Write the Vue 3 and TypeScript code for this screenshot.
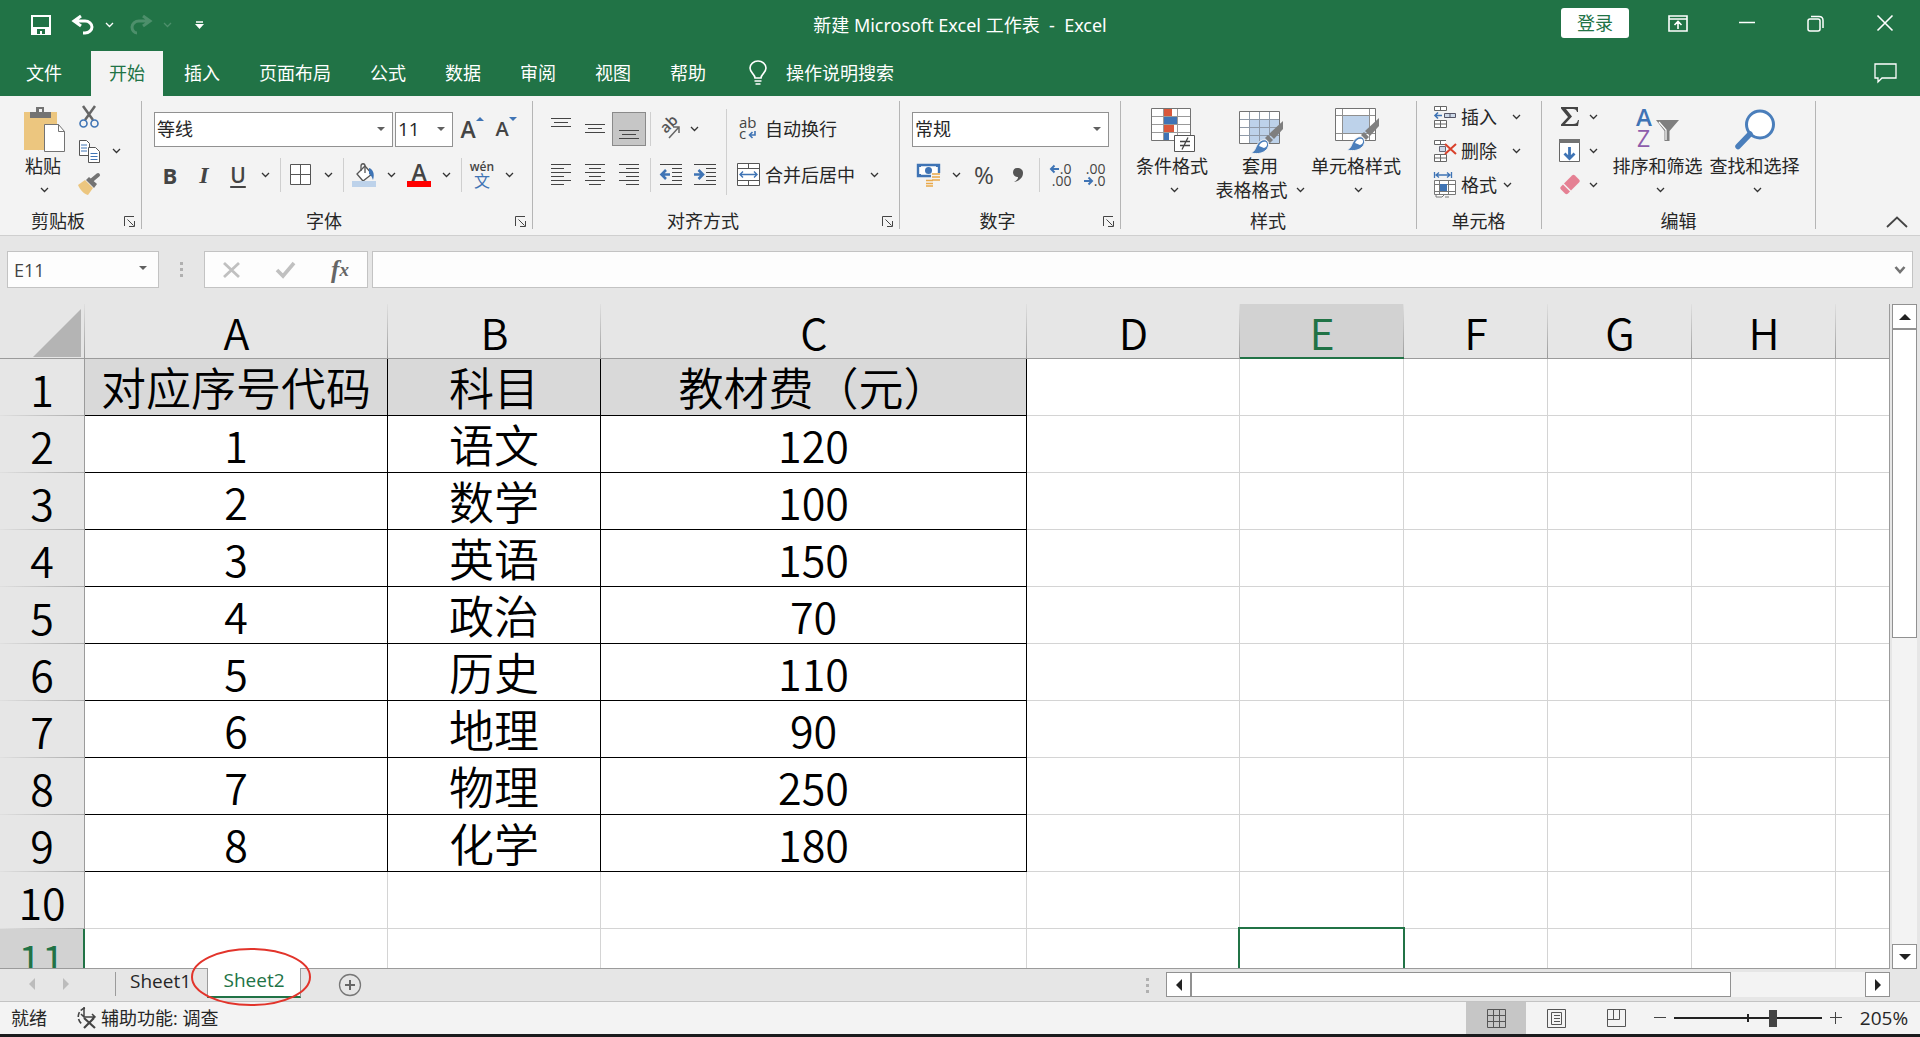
<script setup lang="ts">
import { h, ref } from 'vue'

type Glyph = [number, number, string]

const brush =
  '<path d="M43 12v8L34 30l-5-5z" fill="#7f7f7f"/><path d="M33 31l-3 3-5-5 3-3z" fill="#7f7f7f"/><path d="M26 31c4 3 3 8-1 11-4 3-9 3-14 2 4-2 4-4 6-8 2-4 6-6 9-5z" fill="#4a7ebb" stroke="#f3f3f3"/><path d="M26 33c2 2 1 5-2 6l-5-2c1-3 4-5 7-4z" fill="#fff"/>'
const miniLines = (rows: [number, number, number][]) =>
  rows.map(([y, a, b]) => `<path d="M${a} ${y}.5H${b}" stroke="#444"/>`).join('')

const glyphs: Record<string, Glyph> = {
  save: [20, 20, '<path d="M1 1h18v18H1z" fill="none" stroke="#fff" stroke-width="2"/><path d="M1 12h18v7H1z" fill="#fff"/><path d="M6 14h8v5h-3v-3H9v3H6z" fill="#217346"/>'],
  undo: [22, 20, '<path d="M9 1L2 6l7 5M2 6h11c4 0 7 3 7 6s-3 6-7 6h-2" fill="none" stroke="#fff" stroke-width="3"/>'],
  redo: [22, 20, '<path d="M13 1l7 5-7 5M20 6H9c-4 0-7 3-7 6s2 6 5 6" fill="none" stroke="#4d8f6b" stroke-width="3"/>'],
  custom: [9, 8, '<path d="M1 1h7" stroke="#fff" stroke-width="1.5"/><path d="M0 3h9L4.500 8z" fill="#fff"/>'],
  ribbonMode: [20, 17, '<path d="M1 1h18v15H1zM1 4h18M10 14V7M6.500 10L10 6.500l3.500 3.500" fill="none" stroke="#fff" stroke-width="1.600"/>'],
  minimise: [16, 16, '<path d="M0 7.500h16" stroke="#fff" stroke-width="1.500"/>'],
  restore: [17, 17, '<rect x="1" y="4" width="12" height="12" rx="2" fill="none" stroke="#fff" stroke-width="1.500"/><path d="M4 1.500h8c2.500 0 4 1.500 4 4V13" fill="none" stroke="#fff" stroke-width="1.500"/>'],
  close: [16, 16, '<path d="M.5.5l15 15M15.500.5l-15 15" stroke="#fff" stroke-width="1.600"/>'],
  comment: [23, 20, '<path d="M1 1h21v14H8l-4 4v-4H1z" fill="none" stroke="#fff" stroke-width="1.300"/>'],
  bulb: [18, 24, '<path d="M6 17c0-4-5-5-5-10a8 7 0 0 1 16 0c0 5-5 6-5 10z" fill="none" stroke="#fff" stroke-width="1.600"/><path d="M5.500 20h7M6.500 23h5" stroke="#fff" stroke-width="1.500"/>'],
  chev: [9, 6, '<path d="M1 1l3.500 3.500L8 1" fill="none" stroke="#333" stroke-width="1.300"/>'],
  chevWhite: [9, 6, '<path d="M1 1l3.500 3.500L8 1" fill="none" stroke="#fff" stroke-width="1.300"/>'],
  chevDim: [9, 6, '<path d="M1 1l3.500 3.500L8 1" fill="none" stroke="#4d8f6b" stroke-width="1.300"/>'],
  launcher: [11, 11, '<path d="M.5 10V.5H10M3.500 3.500l6 6M10.500 5v5.500H5" fill="none" stroke="#444"/>'],
  paste: [46, 46, '<g transform="translate(4 0)"><path d="M0 5h33v38H0z" fill="#ecc67f"/><path d="M6 5h6V0h8v5h7v6H6z" fill="#737373"/><path d="M15 2h3v3h-3z" fill="#f3f3f3"/><path d="M20.500 17.500h14l6 7v20h-20z" fill="#fff" stroke="#737373"/><path d="M34.500 17.500v7h6" fill="none" stroke="#737373"/></g>'],
  cut: [20, 22, '<path d="M4 0l10 14M16 0L6 14" stroke="#666" stroke-width="2.500"/><circle cx="4.500" cy="17.500" r="3.500" fill="none" stroke="#3f74b5" stroke-width="1.600"/><circle cx="15.500" cy="17.500" r="3.500" fill="none" stroke="#3f74b5" stroke-width="1.600"/>'],
  copy: [21, 23, '<path d="M.5.500h7l3 3v12H.500z" fill="#fff" stroke="#555"/><path d="M2 5h6M2 8h6M2 11h6" stroke="#3f74b5"/><path d="M9.500 7.500h7l4 4v11h-11z" fill="#fff" stroke="#555"/><path d="M11.500 13.500h7M11.500 16.500h7M11.500 19.500h7" stroke="#3f74b5"/>'],
  painter: [22, 22, '<path d="M0 11l7-5 8 8-5 7c-4-1-8-5-10-10z" fill="#ecc67f"/><path d="M8 6l3-3 8 7-3 4z" fill="#737373"/><path d="M14 6l6-5" stroke="#737373" stroke-width="4" stroke-linecap="round"/>'],
  borders: [22, 22, '<path d="M.5.500h20v20H.5zM10.500 1v19M1 10.500h19" fill="#fff" stroke="#555"/>'],
  bucket: [24, 24, '<path d="M5 11l8-8 7 8-9 7z" fill="#fff" stroke="#555" stroke-width="1.300"/><path d="M9 8V3c0-3 4-3 4 0v7" fill="none" stroke="#555" stroke-width="1.300"/><path d="M17 5c4 1 6 6 4 12-1-3-2-5-4-6z" fill="#3f74b5"/><path d="M0 18h24v6H0z" fill="#bdd2ea"/>'],
  alignTop: [21, 22, miniLines([[0, 0, 20], [4, 3, 17], [8, 0, 20]])],
  alignMid: [21, 22, miniLines([[6, 0, 20], [10, 3, 17], [14, 0, 20]])],
  alignBot: [21, 22, miniLines([[12, 0, 20], [16, 3, 17], [20, 0, 20]])],
  left: [21, 22, miniLines([[0, 0, 20], [4, 0, 13], [8, 0, 20], [12, 0, 13], [16, 0, 20], [20, 0, 13]])],
  center: [21, 22, miniLines([[0, 0, 20], [4, 4, 16], [8, 0, 20], [12, 4, 16], [16, 0, 20], [20, 4, 16]])],
  right: [21, 22, miniLines([[0, 0, 20], [4, 7, 20], [8, 0, 20], [12, 7, 20], [16, 0, 20], [20, 7, 20]])],
  outdent: [23, 22, miniLines([[0, 0, 22], [4, 12, 22], [8, 12, 22], [12, 12, 22], [16, 12, 22], [20, 0, 22]]) + '<path d="M10 10.500H2M6 6l-4.500 4.500L6 15" fill="none" stroke="#3f74b5" stroke-width="2.600"/>'],
  indent: [23, 22, miniLines([[0, 0, 22], [4, 12, 22], [8, 12, 22], [12, 12, 22], [16, 12, 22], [20, 0, 22]]) + '<path d="M0 10.500h8M4.500 6L9 10.500 4.500 15" fill="none" stroke="#3f74b5" stroke-width="2.600"/>'],
  orient: [22, 22, '<path d="M9 20L19 9M13 9h6v6" fill="none" stroke="#666" stroke-width="1.500"/><text transform="translate(6 16) rotate(-45)" font-size="15" font-weight="600" fill="#555" font-family="Open Sans, sans-serif">ab</text>'],
  wrap: [20, 24, '<text x="0" y="11" font-size="15" fill="#444" font-family="Open Sans, sans-serif">ab</text><text x="0" y="22" font-size="15" fill="#444" font-family="Open Sans, sans-serif">c</text><path d="M16 14v4h-5M13.500 15L10.500 18l3 3" fill="none" stroke="#3f74b5" stroke-width="1.600"/>'],
  merge: [24, 24, '<path d="M.5.500h22v22H.5zM1 5.500h21M1 17.500h21M11.500 1v4M11.500 18v4" fill="#fff" stroke="#555"/><path d="M3 11.500h17M6 8.500l-3 3 3 3M17 8.500l3 3-3 3" fill="none" stroke="#3f74b5" stroke-width="1.400"/>'],
  money: [24, 23, '<path d="M1 1h21v11H1z" fill="#fff" stroke="#3f74b5" stroke-width="2.400"/><circle cx="11.500" cy="6.500" r="3.500" fill="#3f74b5"/><path d="M0 0h4v3H0zM19 0h4v3h-4zM0 10h4v3H0z" fill="#3f74b5"/><path d="M14 9h10v9H14zM8 15h10v8H8z" fill="#f3f3f3"/><path d="M15 10h8M15 13h8M15 16h8M9 16.500h7M9 19.500h7M9 22h7" stroke="#e9a94a" stroke-width="1.700"/>'],
  comma: [12, 15, '<path d="M5 0c4 0 6 2 6 5 0 5-4 8-9 9 3-2 4-3 4-5-3 0-5-2-5-4.500S2.500 0 5 0z" fill="#555"/>'],
  arrowL: [9, 8, '<path d="M9 4H1M4.500.5L1 4l3.500 3.500" fill="none" stroke="#3f74b5" stroke-width="2"/>'],
  arrowR: [9, 8, '<path d="M0 4h8M4.500.5L8 4 4.500 7.500" fill="none" stroke="#3f74b5" stroke-width="2"/>'],
  condition: [46, 46, '<path d="M2.500 1.500h39v32h-39z" fill="#fff" stroke="#737373"/><path d="M14.500 2v31M28.500 2v31M3 9.500h38M3 17.500h38M3 25.500h38" stroke="#999"/><path d="M15 2h8v7h-8zM15 18h10v7H15z" fill="#d9583b"/><path d="M15 10h13v7H15zM15 26h5v7h-5z" fill="#3f74b5"/><path d="M25.500 28.500h20v16h-20z" fill="#fff" stroke="#555"/><path d="M31 34.500h10M31 38.500h10M39 30.500l-6 12" stroke="#444" stroke-width="1.300"/>'],
  tableFormat: [46, 46, '<path d="M2.500 4.500h40v32h-40z" fill="#fff" stroke="#737373"/><path d="M13 13h29v23H13z" fill="#bdd2ea"/><path d="M12.500 5v31M22.500 5v31M32.500 5v31M3 12.500h39M3 20.500h39M3 28.500h39" stroke="#8f9aa8"/>' + `<g transform="translate(3 2)">${brush}</g>`],
  cellStyle: [46, 46, '<path d="M2.500 1.500h40v32h-40z" fill="#fff" stroke="#737373"/><path d="M9.500 2v31M36.500 2v31M3 8.500h39M3 26.500h39" stroke="#8f8f8f"/><path d="M10 9h26v17H10z" fill="#bdd2ea"/>' + `<g transform="translate(3 -1)">${brush}</g>`],
  insert: [24, 24, '<path d="M1.500 1.500h12v4h-12zM7.500 2v3M1.500 15.500h12v7h-12zM2 19h11M7.500 16v6" fill="#fff" stroke="#666"/><path d="M11.500 8.500h11v4h-11zM17 9v3" fill="#cdd9e8" stroke="#556"/><path d="M9 10.500H2M5 7.500l-3 3 3 3" fill="none" stroke="#3f74b5" stroke-width="1.600"/>'],
  remove: [24, 24, '<path d="M13 1.500H1.500v4h12M7.500 2v3M1.500 15.500h12v7h-12zM2 19h11M7.500 16v6" fill="#fff" stroke="#666"/><path d="M6.500 7.500h6v5h-6z" fill="#cdd9e8" stroke="#667"/><path d="M12 5l11 10M23 5L12 15" stroke="#d9412b" stroke-width="2"/>'],
  format: [24, 26, '<path d="M1.500 0v6M18.500 0v6M3 3h14M6 .5L3 3l3 2.500M14 .5L17 3l-3 2.500" fill="none" stroke="#3f74b5" stroke-width="1.300"/><path d="M1.500 8.500h21v14h-21zM6.500 9v13M15.500 9v13M2 12.500h20M2 19.500h20M3 23v2h6l2-2M12 25h4" fill="#fff" stroke="#777"/><path d="M7 12h7v7H7z" fill="#3f74b5"/>'],
  sigma: [20, 20, '<path d="M1 0h17v5h-1c-.5-2-1.500-3-4-3H6l6 7.500L5 17h8c3 0 4-1 5-4h1l-1 6H1v-1.500L8 10 1 1.500z" fill="#444"/>'],
  fill: [22, 24, '<path d="M.5.500h20v22H.5z" fill="#fff" stroke="#666"/><path d="M0 0h21v4H0z" fill="#737373"/><path d="M10.500 8v11M5.500 14.500l5 5 5-5" fill="none" stroke="#3f74b5" stroke-width="2.800"/>'],
  eraser: [22, 22, '<path d="M13 1.500c1-1 2-1 3 0l4 4c1 1 1 2 0 3l-8 8L5 9.500z" fill="#e58093"/><path d="M4 10.500l7 7-2 2c-1 1-2 1-3 0l-4-4c-1-1-1-2 0-3z" fill="#e58093"/>'],
  sort: [44, 42, '<path d="M20 11h23L33.500 22v10h-5V22z" fill="#7f7f7f"/><path d="M23 13l7 8v10" fill="none" stroke="#fff" stroke-width="1.200"/><text x="0" y="17" font-size="24" fill="#3f74b5" font-family="Open Sans, sans-serif" font-weight="600">A</text><text x="1" y="38" font-size="23" fill="#8d5cab" font-family="Open Sans, sans-serif">Z</text>'],
  find: [42, 42, '<circle cx="26" cy="15.500" r="13.500" fill="#fff" stroke="#4a7ebb" stroke-width="3"/><path d="M16 25L4 37.500" stroke="#4a7ebb" stroke-width="5.500" stroke-linecap="round"/>'],
  collapse: [22, 12, '<path d="M1 11L11 1.500 21 11" fill="none" stroke="#444" stroke-width="1.800"/>'],
  cross: [18, 16, '<path d="M1 1l15 14M16 1L1 15" stroke="#c0c0c0" stroke-width="2.800"/>'],
  check: [20, 16, '<path d="M1 8l6 6L18 1" fill="none" stroke="#c0c0c0" stroke-width="3.600"/>'],
  expand: [12, 8, '<path d="M1.500 1L6 6l4.500-5" fill="none" stroke="#737373" stroke-width="2.600"/>'],
  corner: [48, 48, '<path d="M48 0v48H0z" fill="#b4b4b4"/>'],
  triUp: [12, 6, '<path d="M0 6l6-6 6 6z" fill="#222"/>'],
  triDown: [12, 6, '<path d="M0 0l6 6 6-6z" fill="#222"/>'],
  triLeft: [6, 12, '<path d="M6 0L0 6l6 6z" fill="#222"/>'],
  triRight: [6, 12, '<path d="M0 0l6 6-6 6z" fill="#222"/>'],
  navLeft: [6, 12, '<path d="M6 0L0 6l6 6z" fill="#bcbcbc"/>'],
  navRight: [6, 12, '<path d="M0 0l6 6-6 6z" fill="#bcbcbc"/>'],
  plusCircle: [24, 24, '<circle cx="12" cy="12" r="10.500" fill="none" stroke="#777" stroke-width="1.300"/><path d="M12 7v10M7 12h10" stroke="#666" stroke-width="2"/>'],
  access: [22, 22, '<path d="M10 1A9 9 0 0 0 7 17" fill="none" stroke="#444" stroke-width="1.600" stroke-dasharray="5 2"/><path d="M9 0v10h11M6 7l3 3M17 7l3 3-3 2" fill="none" stroke="#444" stroke-width="1.500"/><path d="M9 11l11 10M19 11L9 21" stroke="#444" stroke-width="2.200"/>'],
  viewGrid: [19, 19, '<path d="M.5.500h18v18H.5zM6.500 1v17M12.500 1v17M1 6.500h17M1 12.500h17" fill="none" stroke="#555"/>'],
  viewPage: [19, 19, '<path d="M.5.500h18v18H.5zM4.500 3.500h10v12h-10zM7 6.500h6M7 9.500h6M7 12.500h6" fill="none" stroke="#555"/>'],
  viewBreak: [19, 19, '<path d="M.5.500h18v17H.5zM1 10.500h11.500V1M6.500 1v9" fill="none" stroke="#555"/>'],
  minus: [12, 12, '<path d="M0 5.500h12" stroke="#444"/>'],
  plus: [12, 12, '<path d="M0 5.500h12M5.500 0v12" stroke="#444"/>'],
}

const Ico = (props: { n: string }) => {
  const [w, ht, body] = glyphs[props.n]
  return h('svg', { class: 'glyph', width: w, height: ht, viewBox: `0 0 ${w} ${ht}`, 'aria-hidden': 'true', innerHTML: body })
}

const menus = ['插入', '页面布局', '公式', '数据', '审阅', '视图', '帮助']
const columns = ['A', 'B', 'C', 'D', 'E', 'F', 'G', 'H', '']
const rows: string[][] = [
  ['对应序号代码', '科目', '教材费（元）'],
  ['1', '语文', '120'],
  ['2', '数学', '100'],
  ['3', '英语', '150'],
  ['4', '政治', '70'],
  ['5', '历史', '110'],
  ['6', '地理', '90'],
  ['7', '物理', '250'],
  ['8', '化学', '180'],
  [],
  [],
]
const isNumber = (v?: string) => !!v && /^\d+$/.test(v)
const cellRef = ref('E11')
const formula = ref('')
const zoom = ref(68)
</script>

<template>
  <div class="app">
    <header class="top">
      <div class="titlebar">
        <div class="quick">
          <button class="spaced" aria-label="保存"><Ico n="save" /></button>
          <button aria-label="撤消"><Ico n="undo" /></button>
          <button class="drop spaced" aria-label="撤消列表"><Ico n="chevWhite" /></button>
          <button aria-label="恢复"><Ico n="redo" /></button>
          <button class="drop spaced" aria-label="恢复列表"><Ico n="chevDim" /></button>
          <button aria-label="自定义"><Ico n="custom" /></button>
        </div>
        <div class="title">新建 Microsoft Excel 工作表&nbsp; -&nbsp; Excel</div>
        <div class="window">
          <button class="login">登录</button>
          <button class="win" aria-label="功能区显示选项"><Ico n="ribbonMode" /></button>
          <button class="win" aria-label="最小化"><Ico n="minimise" /></button>
          <button class="win" aria-label="还原"><Ico n="restore" /></button>
          <button class="win" aria-label="关闭"><Ico n="close" /></button>
        </div>
      </div>
      <nav class="tabs">
        <button class="file">文件</button>
        <button class="tab active">开始</button>
        <button v-for="m in menus" :key="m" class="tab">{{ m }}</button>
        <button class="tell"><Ico n="bulb" /><span>操作说明搜索</span></button>
        <button class="note" aria-label="批注"><Ico n="comment" /></button>
      </nav>
    </header>

    <section class="ribbon">
      <div class="group g-clip">
        <div class="body">
          <button class="big paste"><span class="pic"><Ico n="paste" /></span><span>粘贴</span><span class="under"><Ico n="chev" /></span></button>
          <div class="stack">
            <div class="line"><button class="ic" aria-label="剪切"><Ico n="cut" /></button></div>
            <div class="line"><button class="ic" aria-label="复制"><Ico n="copy" /></button><button class="dd" aria-label="复制选项"><Ico n="chev" /></button></div>
            <div class="line"><button class="ic" aria-label="格式刷"><Ico n="painter" /></button></div>
          </div>
        </div>
        <div class="label"><span>剪贴板</span><button aria-label="剪贴板设置"><Ico n="launcher" /></button></div>
      </div>

      <div class="group g-font">
        <div class="body rows">
          <div class="row">
            <span class="combo font"><select aria-label="字体"><option>等线</option></select></span>
            <span class="combo size"><select aria-label="字号"><option>11</option></select></span>
            <button class="ic grow" aria-label="增大字号">A<i class="mark"></i></button>
            <button class="ic shrink" aria-label="减小字号">A<i class="mark down"></i></button>
          </div>
          <div class="row">
            <button class="ic bold">B</button>
            <button class="ic italic">I</button>
            <button class="ic underline">U</button>
            <button class="dd" aria-label="下划线选项"><Ico n="chev" /></button>
            <i class="sep"></i>
            <button class="ic" aria-label="边框"><Ico n="borders" /></button>
            <button class="dd" aria-label="边框选项"><Ico n="chev" /></button>
            <i class="sep"></i>
            <button class="ic" aria-label="填充颜色"><Ico n="bucket" /></button>
            <button class="dd" aria-label="填充选项"><Ico n="chev" /></button>
            <button class="ic color"><span>A</span></button>
            <button class="dd" aria-label="字体颜色选项"><Ico n="chev" /></button>
            <i class="sep"></i>
            <button class="ic pinyin"><span>wén</span><span>文</span></button>
            <button class="dd" aria-label="拼音选项"><Ico n="chev" /></button>
          </div>
        </div>
        <div class="label"><span>字体</span><button aria-label="字体设置"><Ico n="launcher" /></button></div>
      </div>

      <div class="group g-align">
        <div class="body">
          <div class="rows">
            <div class="row">
              <button class="ic" aria-label="顶端对齐"><Ico n="alignTop" /></button>
              <button class="ic" aria-label="垂直居中"><Ico n="alignMid" /></button>
              <button class="ic pressed" aria-label="底端对齐"><Ico n="alignBot" /></button>
              <i class="sep"></i>
              <button class="ic" aria-label="方向"><Ico n="orient" /></button>
              <button class="dd slim" aria-label="方向选项"><Ico n="chev" /></button>
            </div>
            <div class="row">
              <button class="ic" aria-label="左对齐"><Ico n="left" /></button>
              <button class="ic" aria-label="居中"><Ico n="center" /></button>
              <button class="ic" aria-label="右对齐"><Ico n="right" /></button>
              <i class="sep"></i>
              <button class="ic" aria-label="减少缩进量"><Ico n="outdent" /></button>
              <button class="ic" aria-label="增加缩进量"><Ico n="indent" /></button>
            </div>
          </div>
          <i class="sep tall"></i>
          <div class="rows wide">
            <div class="row"><button class="texty"><span class="slot"><Ico n="wrap" /></span>自动换行</button></div>
            <div class="row"><button class="texty"><span class="slot"><Ico n="merge" /></span>合并后居中</button><button class="dd apart" aria-label="合并选项"><Ico n="chev" /></button></div>
          </div>
        </div>
        <div class="label"><span>对齐方式</span><button aria-label="对齐设置"><Ico n="launcher" /></button></div>
      </div>

      <div class="group g-number">
        <div class="body rows">
          <div class="row"><span class="combo number"><select aria-label="数字格式"><option>常规</option></select></span></div>
          <div class="row">
            <button class="ic" aria-label="会计数字格式"><Ico n="money" /></button>
            <button class="dd" aria-label="会计选项"><Ico n="chev" /></button>
            <button class="ic percent">%</button>
            <button class="ic" aria-label="千位分隔样式"><Ico n="comma" /></button>
            <i class="sep"></i>
            <button class="ic decimal"><span><Ico n="arrowL" />.0</span><span>.00</span></button>
            <button class="ic decimal"><span>.00</span><span><Ico n="arrowR" />.0</span></button>
          </div>
        </div>
        <div class="label"><span>数字</span><button aria-label="数字设置"><Ico n="launcher" /></button></div>
      </div>

      <div class="group g-style">
        <div class="body">
          <button class="big cond"><span class="pic"><Ico n="condition" /></span><span>条件格式</span><span class="under"><Ico n="chev" /></span></button>
          <button class="big tfmt"><span class="pic"><Ico n="tableFormat" /></span><span>套用</span><span class="under">表格格式<Ico n="chev" /></span></button>
          <button class="big cstyle"><span class="pic"><Ico n="cellStyle" /></span><span>单元格样式</span><span class="under"><Ico n="chev" /></span></button>
        </div>
        <div class="label"><span>样式</span></div>
      </div>

      <div class="group g-cells">
        <div class="body">
          <div class="stack">
            <div class="line"><button class="texty"><span class="slot"><Ico n="insert" /></span>插入</button><button class="dd apart" aria-label="插入选项"><Ico n="chev" /></button></div>
            <div class="line"><button class="texty"><span class="slot"><Ico n="remove" /></span>删除</button><button class="dd apart" aria-label="删除选项"><Ico n="chev" /></button></div>
            <div class="line"><button class="texty"><span class="slot"><Ico n="format" /></span>格式</button><button class="dd" aria-label="格式选项"><Ico n="chev" /></button></div>
          </div>
        </div>
        <div class="label"><span>单元格</span></div>
      </div>

      <div class="group g-edit">
        <div class="body">
          <div class="stack">
            <div class="line"><button class="ic" aria-label="求和"><Ico n="sigma" /></button><button class="dd slim" aria-label="求和选项"><Ico n="chev" /></button></div>
            <div class="line"><button class="ic" aria-label="填充"><Ico n="fill" /></button><button class="dd slim" aria-label="填充选项"><Ico n="chev" /></button></div>
            <div class="line"><button class="ic" aria-label="清除"><Ico n="eraser" /></button><button class="dd slim" aria-label="清除选项"><Ico n="chev" /></button></div>
          </div>
          <button class="big edit"><span class="pic"><Ico n="sort" /></span><span>排序和筛选</span><span class="under"><Ico n="chev" /></span></button>
          <button class="big edit"><span class="pic"><Ico n="find" /></span><span>查找和选择</span><span class="under"><Ico n="chev" /></span></button>
        </div>
        <div class="label"><span>编辑</span></div>
      </div>
      <button class="collapse" aria-label="折叠功能区"><Ico n="collapse" /></button>
    </section>

    <section class="formula">
      <div class="namebox"><input v-model="cellRef" aria-label="名称框" /><i class="caret"></i></div>
      <div class="dots"><i></i><i></i><i></i></div>
      <div class="fx">
        <button aria-label="取消"><Ico n="cross" /></button>
        <button aria-label="输入"><Ico n="check" /></button>
        <button class="fn"><span>f</span><span>x</span></button>
      </div>
      <div class="entry"><input v-model="formula" aria-label="编辑栏" /><button aria-label="展开编辑栏"><Ico n="expand" /></button></div>
    </section>

    <main class="work">
      <div class="sheet">
        <table>
          <colgroup>
            <col class="c-head" />
            <col v-for="(c, i) in columns" :key="i" :class="'c-' + (c || 'rest')" />
          </colgroup>
          <thead>
            <tr>
              <th class="origin"><Ico n="corner" /></th>
              <th v-for="(c, i) in columns" :key="i" :class="{ on: c === 'E', last: !c }" scope="col">{{ c }}</th>
            </tr>
          </thead>
          <tbody>
            <tr v-for="(r, i) in rows" :key="i">
              <th scope="row" :class="{ on: i === 10 }">{{ i + 1 }}</th>
              <td v-for="(c, j) in columns" :key="j" :class="{ data: r.length && j < 3, head: i === 0 && j < 3, num: isNumber(r[j]), cursor: i === 10 && c === 'E' }">{{ r[j] }}</td>
            </tr>
          </tbody>
        </table>
      </div>
      <div class="vscroll">
        <button aria-label="向上滚动"><Ico n="triUp" /></button>
        <div class="thumb"></div>
        <div class="track"></div>
        <button aria-label="向下滚动"><Ico n="triDown" /></button>
      </div>
    </main>

    <div class="sheetbar">
      <button class="nav" aria-label="上一个工作表"><Ico n="navLeft" /></button>
      <button class="nav" aria-label="下一个工作表"><Ico n="navRight" /></button>
      <i class="split"></i>
      <button class="stab">Sheet1</button>
      <button class="stab current">Sheet2<svg class="ring" viewBox="0 0 120 58" aria-hidden="true"><ellipse cx="60" cy="29" rx="59" ry="28" fill="none" stroke="#e2342b" stroke-width="2" /></svg></button>
      <button class="add" aria-label="新工作表"><Ico n="plusCircle" /></button>
      <div class="dots"><i></i><i></i><i></i></div>
      <div class="hscroll">
        <button aria-label="向左滚动"><Ico n="triLeft" /></button>
        <div class="thumb"></div>
        <div class="track"></div>
        <button aria-label="向右滚动"><Ico n="triRight" /></button>
      </div>
    </div>

    <footer class="status">
      <span>就绪</span>
      <button class="access"><Ico n="access" />辅助功能: 调查</button>
      <div class="views">
        <button class="view on" aria-label="普通"><Ico n="viewGrid" /></button>
        <button class="view" aria-label="页面布局"><Ico n="viewPage" /></button>
        <button class="view" aria-label="分页预览"><Ico n="viewBreak" /></button>
      </div>
      <button class="step" aria-label="缩小"><Ico n="minus" /></button>
      <input v-model="zoom" class="slider" type="range" min="0" max="100" aria-label="缩放" />
      <button class="step" aria-label="放大"><Ico n="plus" /></button>
      <button class="pct">205%</button>
    </footer>
  </div>
</template>

<style>
body {
  margin: 0;
  background: #1b1b1d;
}
</style>

<style scoped>
* {
  box-sizing: border-box;
}
.app {
  display: flex;
  flex-direction: column;
  height: 100vh;
  border-bottom: 3px solid #1b1b1d;
  overflow: hidden;
  background: #e6e6e6;
  color: #262626;
  font: 18px/24px 'Open Sans', 'Noto Sans CJK SC', sans-serif;
}
.glyph {
  display: block;
  flex: none;
  overflow: visible;
}
button {
  display: flex;
  align-items: center;
  justify-content: center;
  padding: 0;
  border: 0;
  background: none;
  color: inherit;
  font: inherit;
  white-space: nowrap;
}
i {
  font-style: normal;
}
.top {
  flex: none;
  background: #217346;
  color: #fff;
}
.titlebar {
  display: grid;
  grid-template-columns: 1fr auto 1fr;
  height: 51px;
}
.quick {
  display: flex;
  height: 50px;
  padding-left: 23px;
}
.quick button {
  width: 36px;
}
.quick button.drop {
  width: 16px;
}
.quick button.spaced {
  margin-right: 6px;
}
.title {
  display: flex;
  align-items: center;
  height: 50px;
  font-family: 'Noto Sans', 'Noto Sans CJK SC', sans-serif;
}
.window {
  display: flex;
  justify-content: flex-end;
  align-items: center;
  height: 46px;
  padding-right: 1px;
}
.login {
  width: 68px;
  height: 30px;
  margin-right: 14px;
  border-radius: 3px;
  background: #fff;
  color: #217346;
}
.win {
  width: 69px;
  height: 46px;
}
.tabs {
  display: flex;
  gap: 3px;
  height: 45px;
}
.tabs button {
  padding-bottom: 2px;
}
.file {
  width: 88px;
}
.tab {
  padding: 0 18px;
}
.tab.active {
  background: #f3f3f3;
  color: #217346;
}
.tell {
  gap: 19px;
  margin-left: 22px;
}
.note {
  margin-left: auto;
  margin-right: 23px;
}

.ribbon {
  display: flex;
  flex: none;
  height: 140px;
  border-bottom: 1px solid #cfcfcf;
  background: #f3f3f3;
}
.group {
  display: flex;
  flex: none;
  flex-direction: column;
  background: linear-gradient(#b5b5b5, #b5b5b5) right 5px / 1px 128px no-repeat;
  background-position: right 5px;
}
.g-clip { width: 142px; padding-left: 16px; }
.g-font { width: 391px; padding-left: 11px; }
.g-align { width: 367px; padding-left: 11px; }
.g-number { width: 221px; padding-left: 12px; }
.g-style { width: 296px; padding-left: 8px; }
.g-cells { width: 125px; padding-left: 16px; }
.g-edit { width: 274px; padding-left: 11px; }
.body {
  display: flex;
  height: 111px;
}
.rows {
  display: flex;
  flex-direction: column;
  gap: 12px;
  padding-top: 16px;
}
.row,
.line {
  display: flex;
  align-items: center;
  height: 34px;
}
.stack {
  padding-top: 4px;
}
.label {
  display: flex;
  height: 28px;
  margin-left: -16px;
  align-items: center;
}
.g-font .label,
.g-align .label,
.g-edit .label { margin-left: -12px; }
.g-number .label { margin-left: -12px; }
.g-style .label,
.g-cells .label { margin-left: -18px; }
.g-style .label { margin-left: -10px; }
.label span {
  flex: 1;
  text-align: center;
}
.label button {
  width: 26px;
  height: 24px;
}
.ic {
  width: 34px;
  height: 34px;
  color: #444;
}
.dd {
  width: 21px;
  height: 34px;
}
.dd.slim {
  width: 12px;
}
.dd.apart {
  margin-left: 9px;
}
.sep {
  width: 8px;
  height: 34px;
  background: linear-gradient(#cfcfcf, #cfcfcf) center / 1px 100% no-repeat;
}
.sep.tall {
  height: 86px;
  margin-top: 13px;
}
.big {
  flex-direction: column;
  justify-content: flex-start;
  padding-top: 10px;
}
.big .pic {
  display: flex;
  align-items: center;
  height: 48px;
}
.big .under {
  display: flex;
  align-items: center;
  height: 24px;
  padding-left: 5px;
}
.big.tfmt .under {
  gap: 8px;
  padding-left: 0;
}
.paste { width: 54px; }
.paste + .stack { margin-left: 2px; }
.paste .under { padding-left: 2px; }
.cond { width: 86px; }
.tfmt { width: 90px; }
.cstyle { width: 102px; }
.edit { width: 97px; }
.g-edit .stack { margin-right: 10px; }
.texty {
  gap: 4px;
}
.slot {
  display: flex;
  justify-content: center;
  width: 24px;
}
.wide {
  padding-left: 7px;
}
.pressed {
  border: 1px solid #8a8a8a;
  background: #c6c6c6;
}
.combo {
  position: relative;
  height: 35px;
  border: 1px solid #919191;
  background: #fff;
}
.combo::after,
.caret {
  position: absolute;
  top: 14px;
  right: 7px;
  border: 4px solid transparent;
  border-top-color: #606060;
  content: '';
  pointer-events: none;
}
.caret {
  right: 11px;
}
.combo select {
  width: 100%;
  height: 33px;
  padding: 0 2px;
  border: 0;
  background: none;
  appearance: none;
  color: #262626;
  font: inherit;
}
.font { width: 239px; margin: 0 2px 0 1px; }
.size { width: 58px; margin-right: 2px; }
.size select { font-size: 19px; }
.number { width: 197px; }
.grow,
.shrink {
  font-size: 23px;
  font-weight: 600;
}
.shrink {
  font-size: 20px;
}
.mark {
  align-self: flex-start;
  width: 8px;
  height: 4px;
  margin-top: 5px;
  border: 4px solid transparent;
  border-top: 0;
  border-bottom: 4px solid #3f74b5;
}
.mark.down {
  border-top: 4px solid #3f74b5;
  border-bottom: 0;
}
.bold { font-size: 22px; font-weight: 700; }
.italic { font: italic 700 24px 'Liberation Serif', serif; }
.underline { font-size: 21px; font-weight: 600; text-decoration: underline; text-underline-offset: 3px; }
.color span {
  width: 24px;
  height: 24px;
  border-bottom: 6px solid #f00;
  font-size: 23px;
  font-weight: 600;
  line-height: 18px;
}
.pinyin {
  flex-direction: column;
  font-size: 12px;
  font-weight: 600;
  line-height: 12px;
}
.pinyin span + span {
  color: #3f74b5;
  font-size: 16px;
  font-weight: 400;
  line-height: 16px;
}
.percent { font-size: 24px; }
.decimal {
  flex-direction: column;
  align-items: center;
  font-size: 14px;
  line-height: 12px;
}
.decimal span {
  display: flex;
  align-items: center;
  justify-content: flex-end;
  gap: 1px;
  width: 23px;
}
.collapse {
  align-self: flex-end;
  margin: 0 12px 7px auto;
}

.formula {
  display: flex;
  flex: none;
  height: 68px;
  padding: 15px 7px 16px 7px;
}
.namebox,
.fx,
.entry {
  position: relative;
  display: flex;
  border: 1px solid #c3c3c3;
  background: #fdfdfd;
}
.namebox { width: 152px; }
.formula input {
  flex: 1;
  min-width: 0;
  padding: 0 6px;
  border: 0;
  background: none;
  color: #444;
  font: inherit;
}
.dots {
  display: flex;
  flex-direction: column;
  justify-content: center;
  align-items: center;
  gap: 3px;
}
.dots i {
  width: 3px;
  height: 3px;
  background: #b0b0b0;
}
.formula .dots { width: 45px; }
.fx {
  width: 164px;
  margin-right: 4px;
}
.fx button { flex: 1; }
.fn {
  color: #666;
  font: italic 700 25px 'Liberation Serif', serif;
}
.fn span + span {
  font-size: 19px;
}
.entry { flex: 1; }
.entry button { width: 25px; }

.work {
  display: flex;
  flex: 1;
  min-height: 0;
}
.sheet {
  flex: 1;
  overflow: hidden;
  border-right: 1px solid #9b9b9b;
  border-bottom: 1px solid #9b9b9b;
  background: #fff;
}
table {
  width: 100%;
  table-layout: fixed;
  border-spacing: 0;
  color: #000;
  font: 350 45px/50px 'Noto Sans CJK SC', sans-serif;
}
.c-head { width: 85px; }
.c-A { width: 303px; }
.c-B, .c-D { width: 213px; }
.c-C { width: 426px; }
.c-E { width: 164px; }
.c-F, .c-G, .c-H { width: 144px; }
th,
td {
  height: 57px;
  padding: 0;
  text-align: center;
  font-weight: inherit;
  white-space: nowrap;
}
th,
td.num {
  font-size: 43px;
}
thead th {
  height: 55px;
  border-bottom: 1px solid #9b9b9b;
  background: linear-gradient(#e0e0e0, #9b9b9b) right / 1px 100% no-repeat #e6e6e6;
}
thead th.last {
  background: #e6e6e6;
}
thead th.on {
  border-bottom: 2px solid #217346;
  background-color: #d2d2d2;
  color: #217346;
}
.origin svg {
  margin: 3px 4px 0 auto;
}
tbody th {
  border-right: 1px solid #9b9b9b;
  background: linear-gradient(90deg, #e0e0e0, #ababab) bottom / 100% 1px no-repeat #e6e6e6;
}
tbody th.on {
  border-right: 2px solid #217346;
  background-color: #d2d2d2;
  color: #217346;
}
td {
  border-right: 1px solid #d4d4d4;
  border-bottom: 1px solid #d4d4d4;
}
td:last-child {
  border-right: 0;
}
td.data {
  border-color: #000;
}
td.head {
  background: #d9d9d9;
}
td.cursor {
  position: relative;
}
td.cursor::after {
  position: absolute;
  inset: -2px -2px 0 -2px;
  border: 2px solid #217346;
  content: '';
}
.vscroll {
  display: flex;
  flex-direction: column;
  width: 30px;
  padding: 0 3px 0 2px;
}
.vscroll button,
.hscroll button {
  flex: none;
  width: 25px;
  height: 25px;
  border: 1px solid #919191;
  background: #fff;
}
.thumb {
  border: 1px solid #919191;
  background: #fff;
}
.vscroll .thumb {
  flex: 1 1 309px;
  max-height: 309px;
}
.track {
  flex: 1;
  background: #f3f3f3;
}

.sheetbar {
  display: flex;
  flex: none;
  height: 32px;
  padding-right: 30px;
}
.nav {
  width: 34px;
  height: 30px;
}
.nav:first-child { margin-left: 15px; }
.split {
  width: 1px;
  height: 24px;
  margin: 3px 0 0 32px;
  background: #9b9b9b;
}
.stab {
  height: 24px;
  padding: 0 14px;
  font-size: 19px;
}
.stab.current {
  position: relative;
  width: 94px;
  height: 30px;
  margin: -1px 0 0 2px;
  padding: 0 0 4px;
  border: 1px solid #9b9b9b;
  border-width: 0 1px 2px;
  border-bottom-color: #217346;
  background: #fff;
  color: #217346;
}
.ring {
  position: absolute;
  top: -20px;
  left: -17px;
  width: 120px;
  height: 58px;
}
.add {
  width: 24px;
  height: 32px;
  margin-left: 37px;
}
.sheetbar .dots {
  margin: 0 17px 0 auto;
}
.hscroll {
  display: flex;
  flex: 0 1 724px;
  padding-top: 3px;
}
.hscroll .thumb,
.hscroll .track { height: 25px; }
.hscroll .thumb { flex: 4; }

.status {
  display: flex;
  flex: none;
  align-items: center;
  height: 33px;
  padding: 0 11px;
  border-top: 1px solid #c3c3c3;
  background: #f3f3f3;
}
.access {
  gap: 4px;
  margin-left: 28px;
}
.views {
  display: flex;
  align-self: stretch;
  margin-left: auto;
}
.view { width: 60px; }
.view.on { background: #c6c6c6; }
.step {
  width: 28px;
  height: 28px;
}
.slider {
  width: 148px;
  height: 20px;
  margin: 0;
  appearance: none;
  background:
    linear-gradient(#222, #222) center / 100% 2px no-repeat,
    linear-gradient(#222, #222) center / 2px 8px no-repeat;
}
.slider::-webkit-slider-thumb {
  width: 8px;
  height: 17px;
  appearance: none;
  background: #444;
}
.pct {
  width: 50px;
  margin-left: 9px;
  font-size: 19px;
}
</style>
